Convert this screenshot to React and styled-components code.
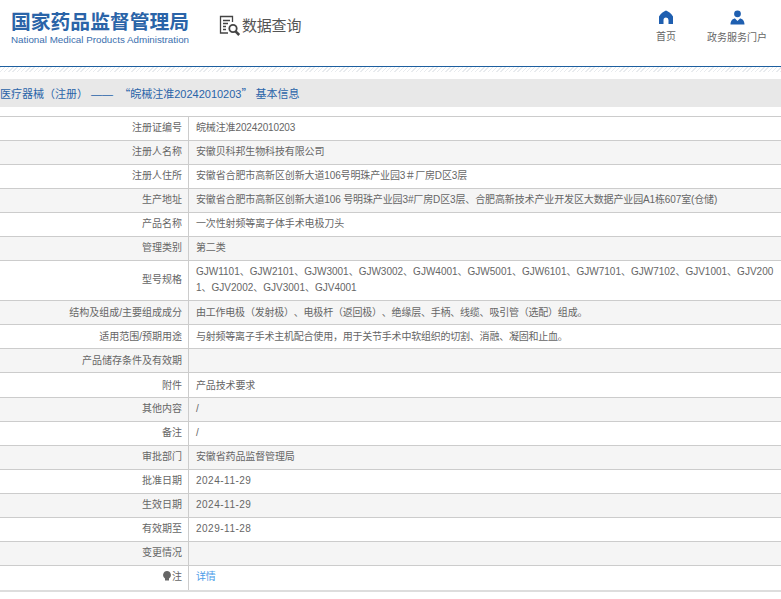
import React from "react";
import styled, { createGlobalStyle } from "styled-components";

const GlobalStyle = createGlobalStyle`
  html, body {
    margin: 0;
    padding: 0;
    background: #fff;
    font-family: "Liberation Sans", "Noto Sans CJK SC", sans-serif;
    text-spacing-trim: space-all;
  }
`;

const rows = [
  { label: "注册证编号", value: "皖械注准20242010203" },
  { label: "注册人名称", value: "安徽贝科邦生物科技有限公司" },
  { label: "注册人住所", value: "安徽省合肥市高新区创新大道106号明珠产业园3＃厂房D区3层" },
  { label: "生产地址", value: "安徽省合肥市高新区创新大道106 号明珠产业园3#厂房D区3层、合肥高新技术产业开发区大数据产业园A1栋607室(仓储)" },
  { label: "产品名称", value: "一次性射频等离子体手术电极刀头" },
  { label: "管理类别", value: "第二类" },
  {
    label: "型号规格",
    kind: "wide",
    value: "GJW1101、GJW2101、GJW3001、GJW3002、GJW4001、GJW5001、GJW6101、GJW7101、GJW7102、GJV1001、GJV2001、GJV2002、GJV3001、GJV4001",
  },
  { label: "结构及组成/主要组成成分", kind: "prose", low: true, value: "由工作电极（发射极）、电极杆（返回极）、绝缘层、手柄、线缆、吸引管（选配）组成。" },
  { label: "适用范围/预期用途", kind: "prose", low: true, value: "与射频等离子手术主机配合使用，用于关节手术中软组织的切割、消融、凝固和止血。" },
  { label: "产品储存条件及有效期", low: true, value: "" },
  { label: "附件", low: true, tall: true, value: "产品技术要求" },
  { label: "其他内容", value: "/" },
  { label: "备注", value: "/" },
  { label: "审批部门", value: "安徽省药品监督管理局" },
  { label: "批准日期", kind: "date", value: "2024-11-29" },
  { label: "生效日期", kind: "date", value: "2024-11-29" },
  { label: "有效期至", kind: "date", value: "2029-11-28" },
  { label: "变更情况", value: "" },
];

const spacing = { wide: "0", date: "0.5px", prose: "-0.22px" };

const Header = styled.header`
  display: flex;
  align-items: flex-start;
  height: 66px;
  border-bottom: 1px solid #1d5f9f;
`;

const Brand = styled.div`
  width: 219px;
  padding: 10px 0 0 11px;
  box-sizing: border-box;
  flex: none;
`;

const BrandName = styled.div`
  font-size: 19.8px;
  line-height: 24px;
  font-weight: 700;
  color: #2a64a8;
  white-space: nowrap;
`;

const BrandSub = styled.div`
  font-size: 9.8px;
  line-height: 12px;
  color: #3b6fae;
  white-space: nowrap;
`;

const Query = styled.div`
  display: flex;
  align-items: center;
  gap: 1px;
  padding-top: 15px;
  font-size: 15px;
  line-height: 22px;
  color: #555;
  letter-spacing: -0.2px;
`;

const Nav = styled.nav`
  display: flex;
  margin-left: auto;
  padding: 10px 14px 0 0;
  gap: 31px;
`;

const NavItem = styled.a`
  display: flex;
  flex-direction: column;
  align-items: center;
  gap: 6px;
  font-size: 10px;
  line-height: 14px;
  color: #666;
`;

const Stripe = styled.div`
  height: 5px;
  background: repeating-linear-gradient(135deg, #e8ebee 0 1px, #fff 1px 3px);
`;

const Crumb = styled.div`
  margin-top: 7px;
  height: 28px;
  line-height: 28px;
  background: #e8e8e8;
  font-size: 11px;
  color: #2a64a8;
  white-space: pre;
`;

const Quote = styled.span`
  font-family: "Noto Sans CJK SC", sans-serif;
`;

const Table = styled.table`
  width: 781px;
  margin-top: 9px;
  border-collapse: collapse;
  table-layout: fixed;
  font-size: 10px;
  line-height: 16px;
  color: #666;
`;

const Row = styled.tr`
  border-top: 1px solid #ccc;
  height: ${(p) => (p.$tall ? "25px" : "auto")};
  &:nth-child(even) {
    background: #f5f5f5;
  }
  &:last-child {
    height: 25px;
    border-bottom: 2px solid #ddd;
  }
`;

const Label = styled.td`
  width: 182px;
  padding: ${(p) => (p.$low ? "4px 6px 3px 0" : "3px 6px 4px 0")};
  text-align: right;
  vertical-align: middle;
  border-right: 1px solid #ccc;
  white-space: nowrap;
`;

const Value = styled.td`
  padding: ${(p) => (p.$low ? "4px 0 3px 7px" : "3px 0 4px 7px")};
  vertical-align: middle;
  word-break: break-all;
  letter-spacing: ${(p) => spacing[p.$kind] || "-0.13px"};
`;

const DetailLink = styled.a`
  color: #4a9be8;
`;

const BulbIcon = styled.svg`
  width: 8px;
  height: 10px;
  vertical-align: -1px;
  margin-right: 1px;
`;

export default function App() {
  return (
    <>
      <GlobalStyle />
      <Header>
        <Brand>
          <BrandName>国家药品监督管理局</BrandName>
          <BrandSub>National Medical Products Administration</BrandSub>
        </Brand>
        <Query>
          <svg width="22" height="22" viewBox="0 0 22 22" fill="none" stroke="#444" strokeWidth="1.3">
            <path d="M9 18H1.5V1.5H13.5V7" />
            <path d="M4 5.5h7M4 8.5h5M4 11.5h3M4 14.5h3" />
            <circle cx="14" cy="13.5" r="3.7" strokeWidth="1.8" />
            <path d="M16.6 16.4l3.6 3.6" strokeWidth="2.6" />
          </svg>
          <span>数据查询</span>
        </Query>
        <Nav>
          <NavItem>
            <svg width="14" height="14" viewBox="0 0 14 14" fill="#1f5fb0">
              <path d="M7 .5C9.5 1.5 12.5 3.6 14 6.5V14H9.5V10a2.5 2.5 0 0 0-5 0V14H0V6.5C1.5 3.6 4.5 1.5 7 .5z" />
            </svg>
            首页
          </NavItem>
          <NavItem>
            <svg width="15" height="15" viewBox="0 0 15 15" fill="#1f5fb0">
              <circle cx="7.5" cy="3.8" r="3.4" />
              <path d="M0.5 14.5c0-4 2.5-6 4.5-6l2.5 2.6 2.5-2.6c2 0 4.5 2 4.5 6z" />
            </svg>
            政务服务门户
          </NavItem>
        </Nav>
      </Header>
      <Stripe />
      <Crumb>
        医疗器械（注册） ——  <Quote>“</Quote>皖械注准20242010203<Quote>”</Quote> 基本信息
      </Crumb>
      <Table>
        <tbody>
          {rows.map((r) => (
            <Row key={r.label} $tall={r.tall}>
              <Label $low={r.low}>{r.label}</Label>
              <Value $kind={r.kind} $low={r.low}>{r.value}</Value>
            </Row>
          ))}
          <Row>
            <Label>
              <BulbIcon viewBox="0 0 8 10" fill="#666">
                <path d="M4 0a4 4 0 0 1 2 7.4V9.5H2V7.4A4 4 0 0 1 4 0z" />
              </BulbIcon>
              注
            </Label>
            <Value>
              <DetailLink>详情</DetailLink>
            </Value>
          </Row>
        </tbody>
      </Table>
    </>
  );
}
